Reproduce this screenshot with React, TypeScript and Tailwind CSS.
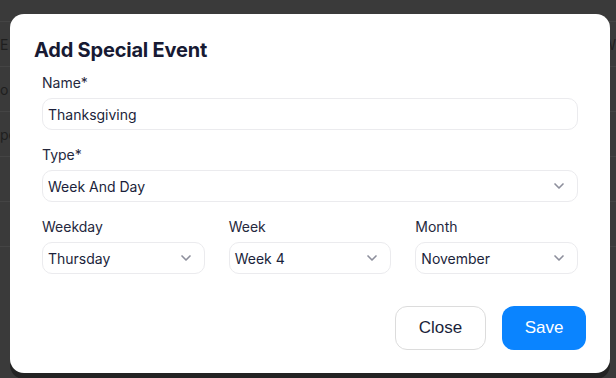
import { ChevronDown } from "lucide-react";

const font = { fontFamily: "Inter, 'Noto Sans', sans-serif" };

function SelectBox({ value }: { value: string }) {
  return (
    <div className="flex h-8 items-center justify-between rounded-[10px] border border-[#ebebee] bg-white pl-[5px] pr-[10px] text-[14px] text-[#1b1f3b]">
      <span>{value}</span>
      <ChevronDown className="h-4 w-4 text-[#8d8f9c]" strokeWidth={2.5} />
    </div>
  );
}

function Field({ label, children }: { label: string; children: React.ReactNode }) {
  return (
    <div className="flex flex-col gap-[7px]">
      <span className="text-[14px] leading-[16px] text-[#25283d]">{label}</span>
      {children}
    </div>
  );
}

const backgroundRows = ["E", "o", "pe", "", ""];

export default function App() {
  return (
    <div className="relative h-[378px] w-[616px] overflow-hidden bg-[#3a3a3a]" style={font}>
      {/* dimmed page behind the modal */}
      <div className="absolute inset-0 flex flex-col">
        <div className="h-[22px] border-b border-[#444]" />
        {backgroundRows.map((t, i) => (
          <div key={i} className="flex h-[45px] items-center justify-between border-b border-[#444] text-[14px] text-[#1f1f1f]">
            <span>{t}</span>
            {i === 0 && <span>W</span>}
          </div>
        ))}
      </div>
      <div className="absolute left-[10px] top-[14px] h-[359px] w-[600px] rounded-[14px] bg-white shadow-[0_6px_0_#232323]">
        <div className="flex h-full flex-col">
          <h2 className="px-[24px] pt-[24px] text-[20px] font-bold leading-[24px] tracking-[-0.2px] text-[#171a33]">
            Add Special Event
          </h2>
          <div className="flex flex-col gap-[17px] px-[32px] pt-[13px]">
            <Field label="Name*">
              <div className="flex h-8 items-center rounded-[10px] border border-[#ebebee] pl-[5px] text-[14px] text-[#1b1f3b]">
                Thanksgiving
              </div>
            </Field>
            <Field label="Type*">
              <SelectBox value="Week And Day" />
            </Field>
            <div className="grid grid-cols-3 gap-6">
              <Field label="Weekday">
                <SelectBox value="Thursday" />
              </Field>
              <Field label="Week">
                <SelectBox value="Week 4" />
              </Field>
              <Field label="Month">
                <SelectBox value="November" />
              </Field>
            </div>
          </div>
          <div
            className="flex justify-end gap-4 px-[24px] pt-[32px]"
            style={{ fontFamily: "'Liberation Sans', Arial, sans-serif" }}
          >
            <button className="h-11 w-[91px] rounded-[12px] border border-[#dcdcdc] bg-white text-[17px] text-[#1b1f3b]">
              Close
            </button>
            <button className="h-11 w-[84px] rounded-[12px] bg-[#0a84ff] text-[17px] text-white">
              Save
            </button>
          </div>
        </div>
      </div>
    </div>
  );
}
